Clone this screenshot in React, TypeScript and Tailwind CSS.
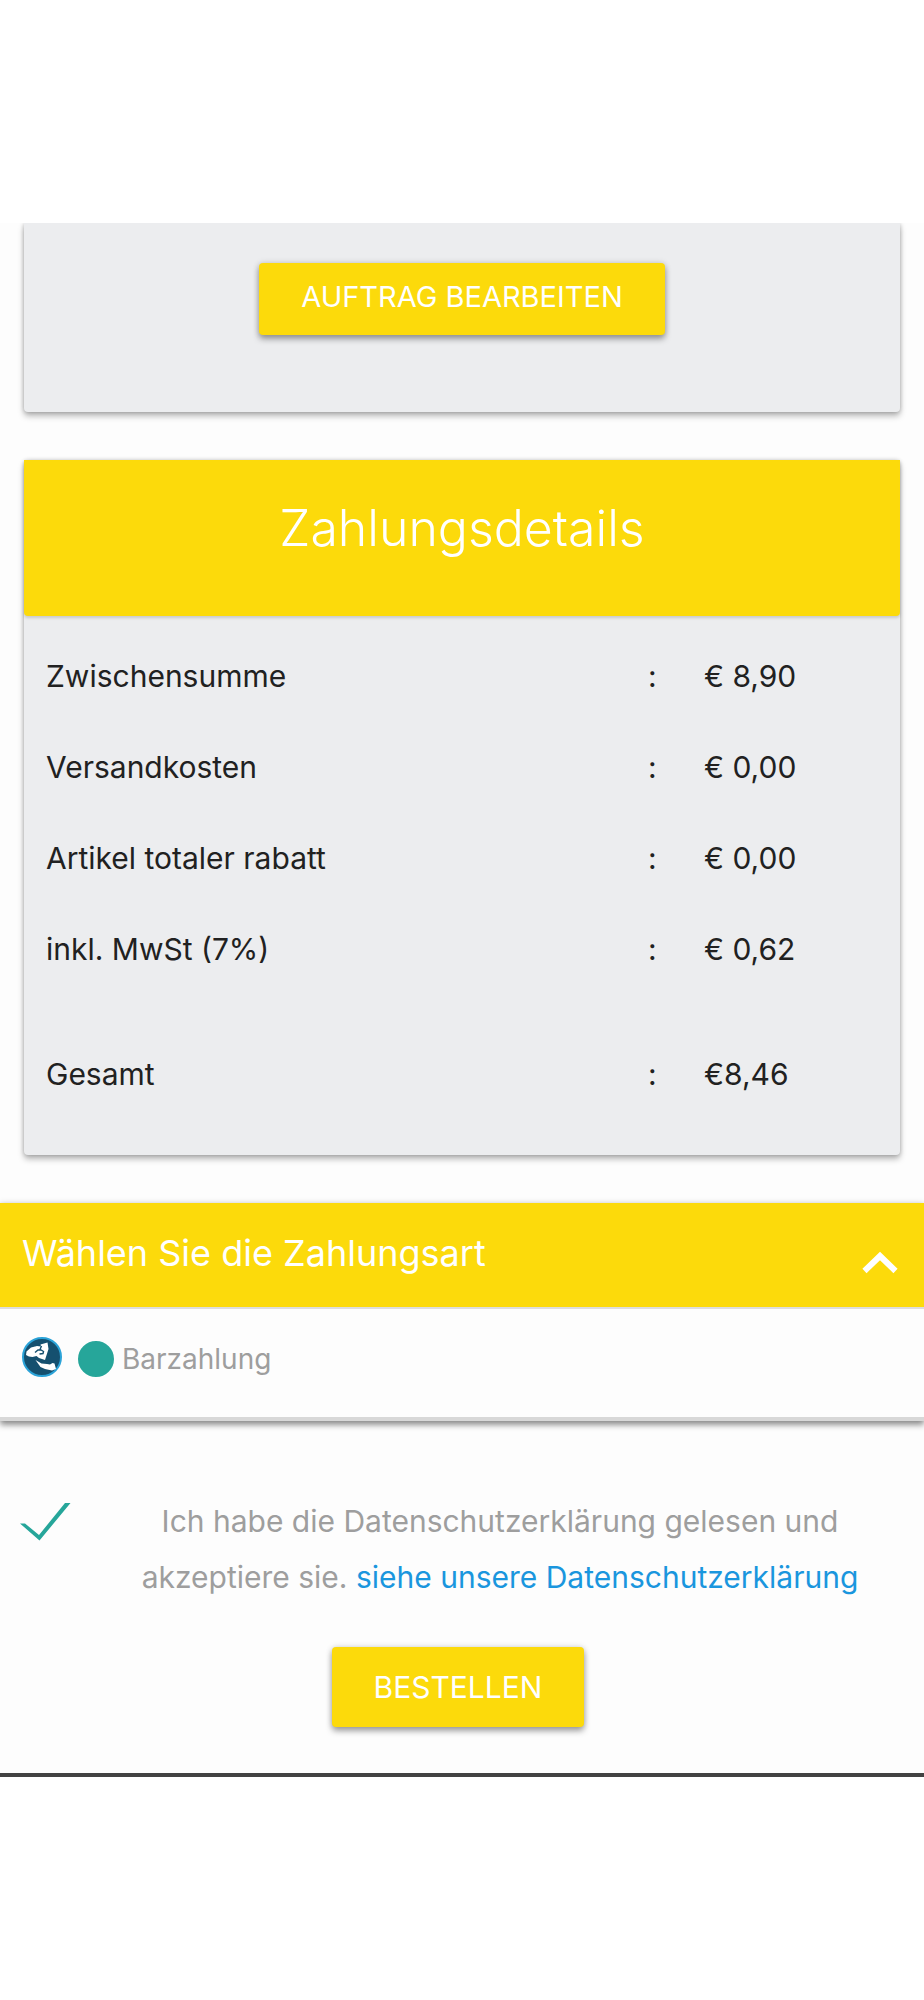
import React, { useState } from 'react';

interface SummaryRow {
  label: string;
  value: string;
}

const rows: SummaryRow[] = [
  { label: 'Zwischensumme', value: '€ 8,90' },
  { label: 'Versandkosten', value: '€ 0,00' },
  { label: 'Artikel totaler rabatt', value: '€ 0,00' },
  { label: 'inkl. MwSt (7%)', value: '€ 0,62' },
];

const total: SummaryRow = { label: 'Gesamt', value: '€8,46' };

const CashIcon = () => (
  <svg viewBox="0 0 40 40" className="h-10 w-10 shrink-0" aria-hidden="true">
    <circle cx="20" cy="20" r="19" fill="#15506f" stroke="#2ba3d8" strokeWidth="2" />
    <path
      d="M18.5 7.5L25.500 5.500l1 6.500-3.500 11-6-2-2.500-2-4 1-3.500-.5-3-1.500.5-3.500L9 10.500l6-1.500 4 .5z"
      fill="#fff"
    />
    <path
      d="M13 15.500l3-2.500h3l2.500 1.500-.5 2-3.500.5M18 12.500l1.500-3.500"
      fill="none"
      stroke="#15506f"
      strokeWidth="1.400"
    />
    <path
      d="M13.500 23l6 3.500 5.500.5 3 .5 2.500-1.500 2 .5 1.500 5.500-4 1.500-7-1.500-4.500-2z"
      fill="#fff"
    />
  </svg>
);

const ChevronUpIcon = () => (
  <svg viewBox="0 0 36 24" className="h-6 w-9 shrink-0" aria-hidden="true">
    <path d="M2.500 20L18 5l15.500 15" fill="none" stroke="#fff" strokeWidth="6" />
  </svg>
);

const CheckIcon = () => (
  <svg viewBox="0 0 52 40" className="h-10 w-13" aria-hidden="true">
    <path d="M0 22.500h5l14 11.500L45 2h5.500L19.500 39.500z" fill="#26a69a" />
  </svg>
);

const SummaryLine = ({ label, value }: SummaryRow) => (
  <tr className="h-[91px]">
    <th scope="row" className="pl-[22px] text-left font-normal">
      {label}
    </th>
    <td className="w-14">:</td>
    <td className="w-[196px]">{value}</td>
  </tr>
);

export default function App() {
  const [open, setOpen] = useState(true);
  const [accepted, setAccepted] = useState(true);

  return (
    <div className="bg-white pt-[223px] pb-56 font-['Inter',sans-serif] text-[30px] leading-9 text-[#212121]">
      <main className="overflow-hidden border-b-4 border-[#424242] bg-[#fdfdfd] pb-[46px]">
        <section className="mx-6 flex justify-center rounded-b bg-[#ecedef] pt-10 pb-[77px] shadow-[0_4px_6px_rgba(0,0,0,0.28),0_0_4px_rgba(0,0,0,0.2)]">
          <button className="rounded bg-[#fcda0b] px-[42px] pt-4 pb-5 text-[29px] text-white uppercase shadow-[0_4px_6px_rgba(0,0,0,0.35),0_0_6px_rgba(0,0,0,0.15)]">
            Auftrag bearbeiten
          </button>
        </section>

        <section className="mx-6 mt-12 rounded bg-[#ecedef] pb-9 shadow-[0_4px_6px_rgba(0,0,0,0.28),0_0_4px_rgba(0,0,0,0.2)]">
          <h2 className="rounded-b bg-[#fcda0b] pt-9 pb-14 text-center text-[50px] leading-16 font-light text-white shadow-[0_2px_3px_rgba(0,0,0,0.15)]">
            Zahlungsdetails
          </h2>
          <table className="mt-[14px] w-full">
            <tbody>
              {rows.map((row) => (
                <SummaryLine key={row.label} {...row} />
              ))}
              <tr className="h-[34px]">
                <td colSpan={3} />
              </tr>
              <SummaryLine {...total} />
            </tbody>
          </table>
        </section>

        <section className="mt-12 border-b-4 border-[#d8d8d8] shadow-[0_4px_6px_rgba(0,0,0,0.4),0_0_6px_rgba(0,0,0,0.15)]">
          <h3 className="border-b-2 border-[#dddddd] bg-[#fcda0b]">
            <button
              aria-expanded={open}
              onClick={() => setOpen(!open)}
              className="flex w-full items-end justify-between pt-7 pr-[26px] pb-8 pl-[22px] text-left text-4xl leading-11 text-white"
            >
              Wählen Sie die Zahlungsart
              <ChevronUpIcon />
            </button>
          </h3>
          {open && (
            <label className="flex items-end bg-[#fdfdfd] pt-7 pb-10 pl-[22px] text-[28px] text-[#9e9e9e]">
              <CashIcon />
              <input
                type="radio"
                name="payment"
                defaultChecked
                className="mr-2 ml-4 h-9 w-9 appearance-none rounded-full border-2 border-[#26a69a] checked:bg-[#26a69a]"
              />
              Barzahlung
            </label>
          )}
        </section>

        <div className="mt-18 flex items-start pr-[60px] pl-5">
          <label htmlFor="privacy" className="mt-2 shrink-0 cursor-pointer">
            <input
              id="privacy"
              type="checkbox"
              aria-label="Datenschutzerklärung"
              checked={accepted}
              onChange={() => setAccepted(!accepted)}
              className="sr-only"
            />
            {accepted && <CheckIcon />}
          </label>
          <p className="flex-1 pl-16 text-center leading-14 text-[#9e9e9e]">
            Ich habe die Datenschutzerklärung gelesen und akzeptiere sie.{' '}
            <a href="#datenschutz" className="text-[#1a96de]">
              siehe unsere Datenschutzerklärung
            </a>
          </p>
        </div>

        <div className="mt-[42px] flex justify-center pr-2">
          <button className="rounded bg-[#fcda0b] px-[42px] py-[22px] text-white uppercase shadow-[0_4px_6px_rgba(0,0,0,0.35),0_0_6px_rgba(0,0,0,0.15)]">
            Bestellen
          </button>
        </div>
      </main>
    </div>
  );
}
